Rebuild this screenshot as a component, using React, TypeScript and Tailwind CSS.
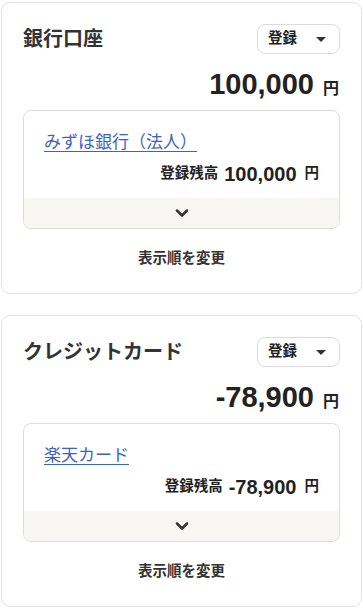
import { ChevronDown } from 'lucide-react';

const font = { fontFamily: '"Liberation Sans", "Noto Sans CJK JP", sans-serif' };

const AccountCard = ({ title, total, name, balance }: { title: string; total: string; name: string; balance: string }) => (
  <div className="bg-white border border-[#e3e3e3] rounded-[9px] px-[21px] pt-[21px] pb-[25px]">
    <div className="flex items-center justify-between h-[30px]">
      <h2 className="text-[20px] font-bold text-[#333] leading-none">{title}</h2>
      <button className="w-[83px] h-[30px] border border-[#dcdcdc] rounded-[8px] flex items-center pl-[10px] pr-[13px] justify-between bg-white">
        <span className="text-[14.5px] font-bold text-[#222]">登録</span>
        <svg width="10" height="5" viewBox="0 0 10 5"><path d="M0 0h10L5 5z" fill="#333" /></svg>
      </button>
    </div>
    <div className="flex items-baseline justify-end mt-[16px] pr-[1px] h-[30px]">
      <span className="text-[29px] font-bold text-[#222] leading-none">{total}</span>
      <span className="text-[16px] font-bold text-[#222] ml-[9px] leading-none">円</span>
    </div>
    <div className="mt-[10px] border border-[#e2ddd6] rounded-[8px] overflow-hidden">
      <div className="px-[20px] pt-[21px] pb-[12px]">
        <div className="h-[22px] leading-[22px]">
          <a href="#" className="text-[17px] text-[#3a62c8] underline underline-offset-[3px]">{name}</a>
        </div>
        <div className="flex items-center justify-end mt-[8px] h-[24px]">
          <span className="text-[14.5px] font-bold text-[#222]">登録残高</span>
          <span className="text-[20px] font-bold text-[#222] ml-[6px]">{balance}</span>
          <span className="text-[14.5px] font-bold text-[#222] ml-[8px]">円</span>
        </div>
      </div>
      <div className="bg-[#f7f6f3] h-[30px] flex items-center justify-center">
        <ChevronDown size={20} strokeWidth={3} className="text-[#333]" />
      </div>
    </div>
    <div className="text-center text-[14.5px] font-bold text-[#333] mt-[19px] leading-[20px]">表示順を変更</div>
  </div>
);

export default function App() {
  return (
    <div className="w-[363px] bg-white px-[1px] pt-[2px] flex flex-col gap-[21px]" style={font}>
      <AccountCard title="銀行口座" total="100,000" name="みずほ銀行（法人）" balance="100,000" />
      <AccountCard title="クレジットカード" total="-78,900" name="楽天カード" balance="-78,900" />
    </div>
  );
}
